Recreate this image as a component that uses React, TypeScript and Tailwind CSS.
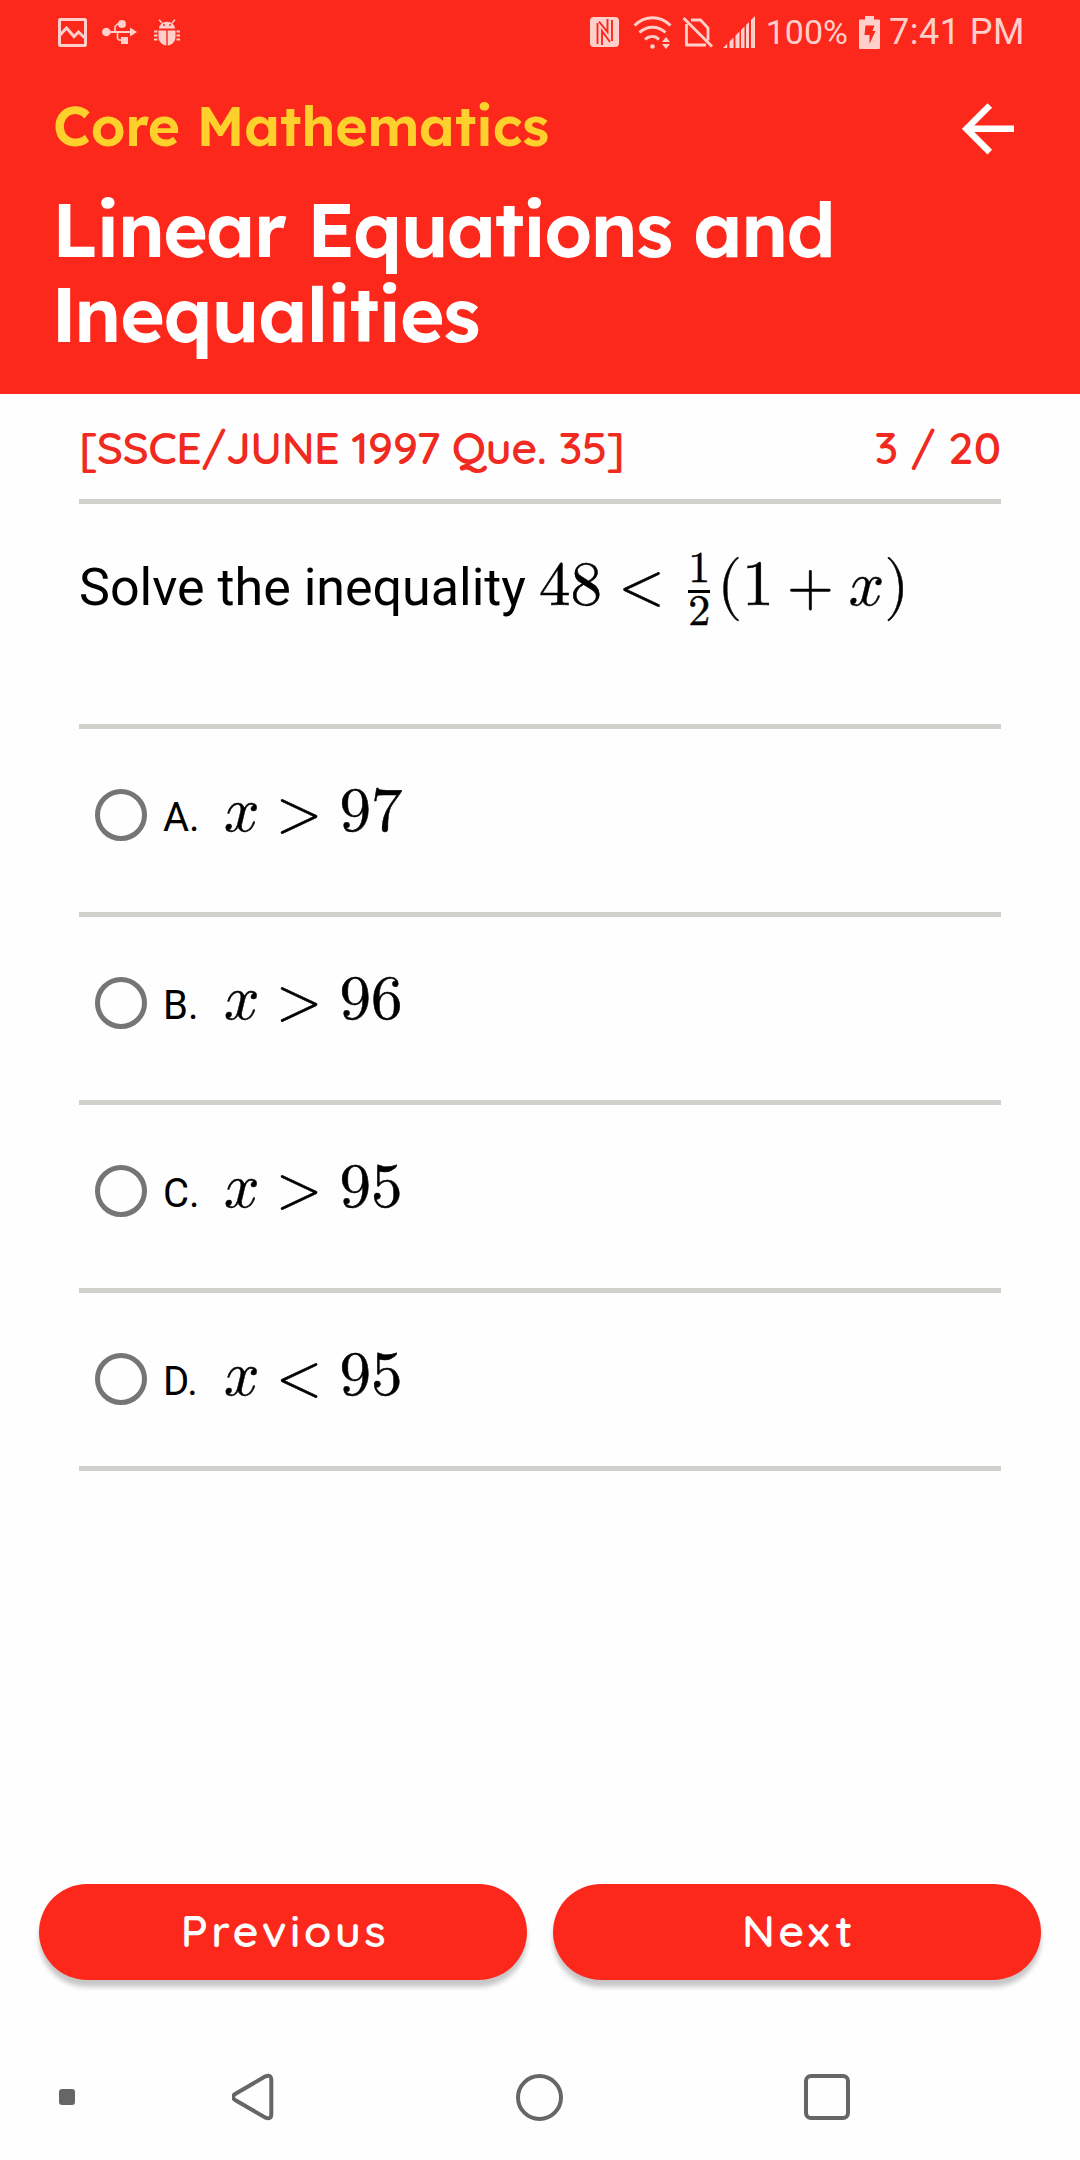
import React from "react";

const HEADING = "font-['Lexend','Inter',sans-serif] font-semibold";
const BRAND = "font-['Quicksand','Lexend','Inter',sans-serif] font-semibold";
const MATH = "font-['Latin_Modern_Math','Liberation_Serif',serif] leading-[0] [-webkit-text-stroke:0.5px_black]";

function StatusBar() {
  return (
    <div className="flex h-16 items-center justify-between pl-[58px] pr-[55px] text-[#fecfcb]">
      <div className="flex items-center">
        <svg width="29" height="29" viewBox="0 0 29 29" fill="none" stroke="currentColor">
          <rect x="1.5" y="1.5" width="26" height="26" rx="1" strokeWidth="3" />
          <path d="M2 17 L8.5 10 L16 18.5 L20.500 14 L27 20" strokeWidth="3" />
        </svg>
        <svg className="ml-[15px]" width="35" height="24" viewBox="0 0 35 24" fill="currentColor">
          <circle cx="4.300" cy="12" r="4.300" />
          <path d="M4 11h25v2H4z" />
          <path d="M28 7.500L35 12l-7 4.500z" />
          <circle cx="20" cy="4" r="4" />
          <path d="M20 4h-4.500l-2.500 2.500V12M15.500 12v6.500l1.500 1.500h4" fill="none" stroke="currentColor" strokeWidth="1.600" />
          <rect x="19" y="17" width="7" height="7" />
        </svg>
        <svg className="ml-[17px]" width="26" height="27" viewBox="0 0 26 27" fill="currentColor">
          <path d="M5 9.500a8 6.800 0 0 1 16 0z" />
          <path d="M8 4L5 .8M18 4l3-3.200" stroke="currentColor" strokeWidth="1.500" />
          <path d="M4.500 11.500h7.800v15C7.500 26 4.500 22 4.500 18zM13.700 11.500h7.800V18c0 4-3 8-7.800 8.500z" />
          <path d="M0 12.500h3.500M0 16.500h3.500M0 20.500h3.500M22.500 12.500H26M22.500 16.500H26M22.500 20.500H26" stroke="currentColor" strokeWidth="1.800" />
          <circle cx="10" cy="6" r="1" fill="#fd281c" />
          <circle cx="16" cy="6" r="1" fill="#fd281c" />
        </svg>
      </div>
      <div className="flex items-center font-['Roboto',sans-serif]">
        <svg width="29" height="30" viewBox="0 0 29 30">
          <rect width="29" height="30" rx="4" fill="currentColor" />
          <path d="M7.500 6v21M12 28V14l8 11M22 3v21M17.500 2v13L9 4.500" fill="none" stroke="#fd281c" strokeWidth="1.900" />
        </svg>
        <svg className="ml-[14px]" width="39" height="33" viewBox="0 0 39 33" fill="none" stroke="currentColor" strokeWidth="3">
          <path d="M1.500 9.500C12-.8 27-.8 37.500 9.500M6.500 16.500c7.500-7 18.500-7 26 0M12 23.500c4.500-4 10-4 14 0" />
          <circle cx="19.500" cy="30.500" r="2.300" fill="currentColor" stroke="none" />
          <path d="M29 26l4-5 4 5zM29 28l4 5 4-5z" fill="currentColor" stroke="none" />
        </svg>
        <svg className="ml-[11px]" width="30" height="31" viewBox="0 0 30 31" fill="none" stroke="currentColor" strokeWidth="2.800">
          <path d="M8 3h9.500l7.500 8v12.500M3.500 7v21H23" />
          <path d="M.5 1L29 29.500" />
        </svg>
        <svg className="ml-[10px]" width="32" height="32" viewBox="0 0 32 32" fill="currentColor">
          <path d="M0 32l4.200-4.200V32zM6.500 32v-6.500l4-4V32zM12.500 32V19.500l4-4V32zM18 32V14l3.500-3.500V32zM23 32V9l3-3v26zM28 32V4l4-4v32z" />
        </svg>
        <span className="ml-[11px] text-[34px] leading-none">100%</span>
        <svg className="ml-[11px]" width="21" height="33" viewBox="0 0 21 33">
          <path d="M6 0h9v3.500h5a1 1 0 0 1 1 1V32a1 1 0 0 1-1 1H1a1 1 0 0 1-1-1V4.500a1 1 0 0 1 1-1h5z" fill="currentColor" />
          <path d="M6.500 9.500h9L13.500 15h3l-6 13V19H5.500z" fill="#fd281c" />
        </svg>
        <span className="ml-[9px] text-[36px] leading-none tracking-[0.5px]">7:41 PM</span>
      </div>
    </div>
  );
}

function Header() {
  return (
    <header className="h-[394px] bg-[#fd281c]">
      <StatusBar />
      <div className={`${HEADING} flex h-[122px] items-center justify-between pl-[53px] pr-[66px]`}>
        <span className="text-[55px] leading-none tracking-[-0.25px] text-[#fdd02c]">Core Mathematics</span>
        <svg className="mt-[7px]" width="52" height="52" viewBox="0 0 52 52" fill="none" stroke="white" strokeWidth="6.500">
          <path d="M52 25.800H6M27.800 2.500L4.500 25.800l23.300 23.300" />
        </svg>
      </div>
      <h1 className={`${HEADING} pl-[52px] text-[76px] leading-[85px] text-white`}>
        <span className="block tracking-[-1.750px]">Linear Equations and</span>
        <span className="block pl-[1px] tracking-[-1.200px]">
          <span className="font-['Outfit','Inter',sans-serif] font-bold">I</span>nequalities
        </span>
      </h1>
    </header>
  );
}

function Question() {
  return (
    <div className="flex h-[225px] items-baseline border-b-5 border-[#d0d0cc] pt-[44px] text-black">
      <span className="w-[447px] whitespace-nowrap font-['Roboto',sans-serif] text-[52px] leading-[80px]">Solve the inequality</span>
      <span className={`${MATH} ml-[13px] text-[63px]`}>48</span>
      <span className={`${MATH} ml-[17px] -translate-y-[1px] text-[58px]`}>&lt;</span>
      <span className={`${MATH} ml-[24px] flex w-[22px] -translate-y-[23px] flex-col items-center text-[44px]`}>
        <span>1</span>
        <span className="mt-[21px] mb-[19px] h-[3px] w-full bg-black" />
        <span>2</span>
      </span>
      <span className={`${MATH} ml-[7px] text-[64px]`}>(1</span>
      <span className={`${MATH} ml-[13px] text-[60px]`}>+</span>
      <span className={`${MATH} ml-[15px] text-[62px]`}>𝑥</span>
      <span className={`${MATH} text-[64px]`}>)</span>
    </div>
  );
}

type Choice = { label: string; sign: string; value: string };

const CHOICES: Choice[] = [
  { label: "A.", sign: ">", value: "97" },
  { label: "B.", sign: ">", value: "96" },
  { label: "C.", sign: ">", value: "95" },
  { label: "D.", sign: "<", value: "95" },
];

function ChoiceRow({ label, sign, value }: Choice) {
  return (
    <label className="flex h-[188px] items-start border-b-5 border-[#d1d0cd] pl-4 last:h-[178px]">
      <span className="mt-[60px] size-[52px] rounded-full border-5 border-[#757575]" />
      <span className="ml-[16px] mt-[59px] flex items-baseline text-black">
        <span className="w-[61px] font-['Roboto',sans-serif] text-[40px] leading-[60px]">{label}</span>
        <span className={`${MATH} text-[62px]`}>𝑥</span>
        <span className={`${MATH} ml-[17px] text-[58px]`}>{sign}</span>
        <span className={`${MATH} ml-[18px] text-[63px]`}>{value}</span>
      </span>
    </label>
  );
}

function PillButton({ children }: { children: string }) {
  return (
    <button className={`${BRAND} h-24 w-[488px] rounded-full bg-[#fd281c] pb-[3px] pl-1 text-[45px] leading-none tracking-[3.400px] text-white shadow-[0_7px_5px_rgba(0,0,0,0.22)]`}>
      {children}
    </button>
  );
}

function NavBar() {
  return (
    <nav className="mt-[93px] flex h-[48px] items-center pl-[59px] text-[#666]">
      <span className="size-4 rounded-[3px] bg-[#666]" />
      <svg className="ml-[157px]" width="43" height="48" viewBox="1 0 43 48" fill="none" stroke="currentColor" strokeWidth="4">
        <path d="M34.500 3.300L4.500 20.800q-5 3.200 0 6.400l30 17.500q5.800 2.300 5.800-3.700V7q0-6-5.800-3.700z" />
      </svg>
      <span className="ml-[241px] size-[47px] rounded-full border-4 border-[#666]" />
      <span className="ml-[241px] size-[46px] rounded-[7px] border-4 border-[#666]" />
    </nav>
  );
}

export default function App() {
  return (
    <div className="flex h-[2160px] w-[1080px] flex-col overflow-hidden bg-[#fefefe]">
      <Header />
      <main className="flex-1 px-[79px]">
        <div className={`${BRAND} flex h-[110px] justify-between border-b-5 border-[#d0d0cc] pt-[30px] text-[45px] leading-[46px] text-[#f02a20]`}>
          <span className="tracking-[-0.550px]">[SSCE/JUNE 1997 Que. 35]</span>
          <span>3 / 20</span>
        </div>
        <Question />
        <div>
          {CHOICES.map((choice) => (
            <ChoiceRow key={choice.label} {...choice} />
          ))}
        </div>
      </main>
      <footer className="h-[276px]">
        <div className="flex justify-between px-[39px]">
          <PillButton>Previous</PillButton>
          <PillButton>Next</PillButton>
        </div>
        <NavBar />
      </footer>
    </div>
  );
}
